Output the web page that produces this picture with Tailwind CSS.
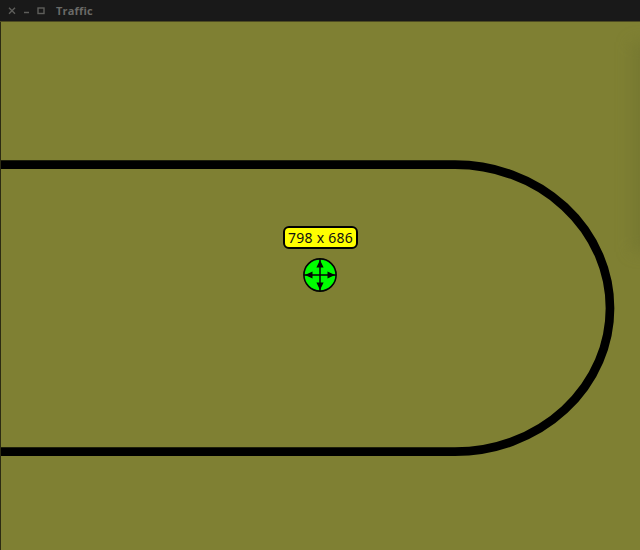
<!DOCTYPE html>
<html lang="en">
<head>
<meta charset="utf-8">
<title>Traffic</title>
<script src="https://cdn.jsdelivr.net/npm/@tailwindcss/browser@4"></script>
</head>
<body class="flex h-[550px] w-[640px] flex-col overflow-hidden bg-[#7f8033] font-['Open_Sans','Noto_Sans',sans-serif]">
  <header class="flex h-[22px] shrink-0 items-center border-b border-[#4d4b22] bg-[#191919] pl-2 text-[#6a6a67]">
    <svg class="h-[22px] w-[38px]" viewBox="0 0 38 22" fill="none" stroke="#5e5e5b" stroke-width="1.4">
      <path d="M1 7.7l6 6M7 7.7l-6 6M16 12.5h5"/>
      <rect x="30" y="8" width="6" height="5.5"/>
    </svg>
    <h1 class="ml-[10px] text-[11px] leading-none font-bold tracking-[0.2px]">Traffic</h1>
  </header>
  <main class="relative h-[528px] overflow-hidden border-l border-[#2c2b12]">
    <div class="absolute top-5 -right-4 h-[210px] w-[24px] bg-[#686b2c]/40 blur-[8px]"></div>
    <svg class="absolute top-0 left-0 h-[528px] w-[639px]" viewBox="1 22 639 528" fill="none">
      <path d="M0 164.7H455A155 143.5 0 0 1 455 451.7H0" stroke="#000" stroke-width="8.7"/>
      <g stroke="#050505">
        <circle cx="320" cy="275" r="16.1" fill="#00ff00" stroke-width="1.6"/>
        <path d="M304 275h32M320 259v32" stroke-width="1.5"/>
        <g fill="#050505" stroke="none">
          <path d="M305 275l7.5-3.6v7.2zM335 275l-7.5-3.6v7.2zM320 260l-3.6 7.5h7.2zM320 290l-3.6-7.5h7.2z"/>
        </g>
      </g>
    </svg>
    <div class="absolute top-[204px] left-[282px] flex h-[23px] w-[75px] items-center justify-center rounded-[6px] border-2 border-black bg-[#ffff00] font-['Noto_Sans','Open_Sans',sans-serif] text-[14px] leading-none tracking-[0.25px] whitespace-nowrap text-[#111]">798 x 686</div>
  </main>
</body>
</html>
